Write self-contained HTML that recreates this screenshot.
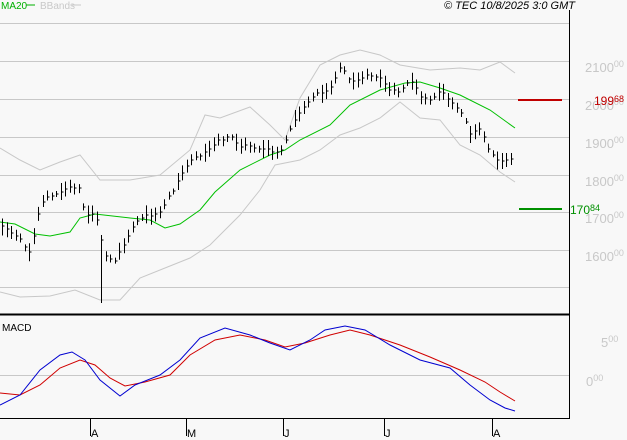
<!DOCTYPE html>
<html><head><meta charset="utf-8"><style>
html,body{margin:0;padding:0;background:#f8f8f8}
svg{display:block;font-family:"Liberation Sans",sans-serif}
</style></head><body>
<svg id="s" width="627" height="440" viewBox="0 0 627 440" xmlns="http://www.w3.org/2000/svg">
<rect width="627" height="440" fill="#f8f8f8"/>
<g stroke="#c8c8c8" stroke-width="1">
<line x1="0" y1="23.5" x2="569" y2="23.5"/>
<line x1="0" y1="61.5" x2="569" y2="61.5"/>
<line x1="0" y1="99.5" x2="569" y2="99.5"/>
<line x1="0" y1="137.5" x2="569" y2="137.5"/>
<line x1="0" y1="175.5" x2="569" y2="175.5"/>
<line x1="0" y1="212.5" x2="569" y2="212.5"/>
<line x1="0" y1="250.5" x2="569" y2="250.5"/>
<line x1="0" y1="287.5" x2="569" y2="287.5"/>
<line x1="0" y1="375.5" x2="569" y2="375.5"/>
</g>
<g fill="#c8c8c8" font-size="13">
<text x="585" y="72">2100<tspan font-size="9" dy="-5">00</tspan></text>
<text x="585" y="110">2000<tspan font-size="9" dy="-5">00</tspan></text>
<text x="585" y="148">1900<tspan font-size="9" dy="-5">00</tspan></text>
<text x="585" y="186">1800<tspan font-size="9" dy="-5">00</tspan></text>
<text x="585" y="223">1700<tspan font-size="9" dy="-5">00</tspan></text>
<text x="585" y="261">1600<tspan font-size="9" dy="-5">00</tspan></text>
<text x="601" y="347">5<tspan font-size="9" dy="-5">00</tspan></text>
<text x="586" y="386">0<tspan font-size="9" dy="-5">00</tspan></text>
</g>
<polyline fill="none" stroke="#c8c8c8" points="0,148 20,160 40,170 60,162 80,155 100,180 130,180 160,175 190,150 205,115 220,118 250,107 270,125 285,140 300,98 320,65 340,55 360,50 380,55 400,65 430,70 460,68 480,70 500,62 515,73"/>
<polyline fill="none" stroke="#c8c8c8" points="0,292 20,297 50,296 75,290 100,300 120,300 140,278 165,268 190,258 210,245 240,215 260,190 275,165 300,160 320,150 340,135 360,128 380,118 400,102 420,118 440,120 460,145 480,155 500,172 515,182"/>
<polyline fill="none" stroke="#00c000" points="0,222 15,224 35,234 50,236 70,232 80,218 95,214 130,218 150,220 165,228 180,224 200,210 215,192 240,170 270,155 285,150 300,140 330,125 350,105 380,90 405,83 420,82 440,88 460,95 490,110 515,128"/>
<g id="bars" stroke="#000" stroke-width="1"></g>
<line x1="518" y1="100" x2="562" y2="100" stroke="#c00000" stroke-width="2"/>
<text x="594" y="105" fill="#c00000" font-size="12">199<tspan font-size="9" dy="-3">68</tspan></text>
<line x1="519" y1="209" x2="562" y2="209" stroke="#009000" stroke-width="2"/>
<text x="570" y="214" fill="#009000" font-size="12">170<tspan font-size="9" dy="-3">84</tspan></text>
<polyline fill="none" stroke="#d00000" points="0,393 20,395 40,385 60,368 80,360 95,365 110,378 125,386 145,382 170,375 190,355 215,340 240,335 265,340 285,347 305,343 330,335 350,330 370,335 400,345 430,357 460,370 485,382 500,392 515,401"/>
<polyline fill="none" stroke="#0000d0" points="0,405 20,395 40,370 60,355 72,352 85,360 100,380 120,396 135,385 160,375 180,360 200,338 225,328 250,335 270,343 290,350 310,340 325,330 345,326 365,330 390,345 420,360 450,368 470,385 490,400 505,408 515,411"/>
<line x1="569.5" y1="10" x2="569.5" y2="419" stroke="#000"/>
<line x1="0" y1="314.5" x2="570" y2="314.5" stroke="#000" stroke-width="2"/>
<line x1="0" y1="418.5" x2="570" y2="418.5" stroke="#000"/>
<g stroke="#000"><line x1="90.5" y1="419" x2="90.5" y2="436"/><line x1="186.5" y1="419" x2="186.5" y2="436"/><line x1="283.5" y1="419" x2="283.5" y2="436"/><line x1="384.5" y1="419" x2="384.5" y2="436"/><line x1="492.5" y1="419" x2="492.5" y2="436"/></g>
<g font-size="11" fill="#000"><text x="91" y="437">A</text><text x="187" y="437">M</text><text x="284" y="437">J</text><text x="385" y="437">J</text><text x="493" y="437">A</text></g>
<text x="2" y="331" font-size="10" fill="#000">MACD</text>
<text x="1" y="9" font-size="10" fill="#00b000">MA20</text><line x1="26" y1="5" x2="35" y2="5" stroke="#00b000"/>
<text x="40" y="9" font-size="10" fill="#c8c8c8">BBands</text><line x1="72" y1="5" x2="81" y2="5" stroke="#c8c8c8"/>
<text x="575" y="9" font-size="11" font-style="italic" fill="#000" text-anchor="end">© TEC 10/8/2025 3:0 GMT</text>
</svg>
<script>
var c=[[2,225],[20,240],[30,252],[40,205],[50,195],[65,190],[78,185],[85,215],[95,215],[105,255],[115,262],[125,240],[135,222],[150,215],[160,212],[170,195],[180,175],[190,162],[200,155],[210,148],[220,140],[230,135],[240,148],[250,145],[260,150],[270,150],[280,152],[290,130],[300,110],[310,100],[320,92],[330,88],[340,68],[350,80],[360,80],[370,74],[380,78],[390,92],[400,90],[410,80],[420,95],[430,100],[440,92],[450,100],[460,112],[470,132],[480,128],[490,155],[500,160],[512,160]];
function iy(x){for(var i=1;i<c.length;i++){if(x<=c[i][0]){var a=c[i-1],b=c[i];return a[1]+(b[1]-a[1])*(x-a[0])/(b[0]-a[0]);}}return c[c.length-1][1];}
var g=document.getElementById('bars'),h='',k=0;
for(var x=2;x<=514;x+=4.5){k++;var xx=Math.round(x)+0.5;var y=iy(x);var r=6+((k*37)%13);var o=((k*53)%11)-5;
var t=y-r/2+o*0.5,b=y+r/2+o*0.5;if(k==23)b=303;
h+='<line x1="'+xx+'" y1="'+t.toFixed(1)+'" x2="'+xx+'" y2="'+b.toFixed(1)+'"/>';
h+='<line x1="'+xx+'" y1="'+(y+o*0.3).toFixed(0)+'" x2="'+(xx+2)+'" y2="'+(y+o*0.3).toFixed(0)+'"/>';}
g.innerHTML=h;
</script>
</body></html>
